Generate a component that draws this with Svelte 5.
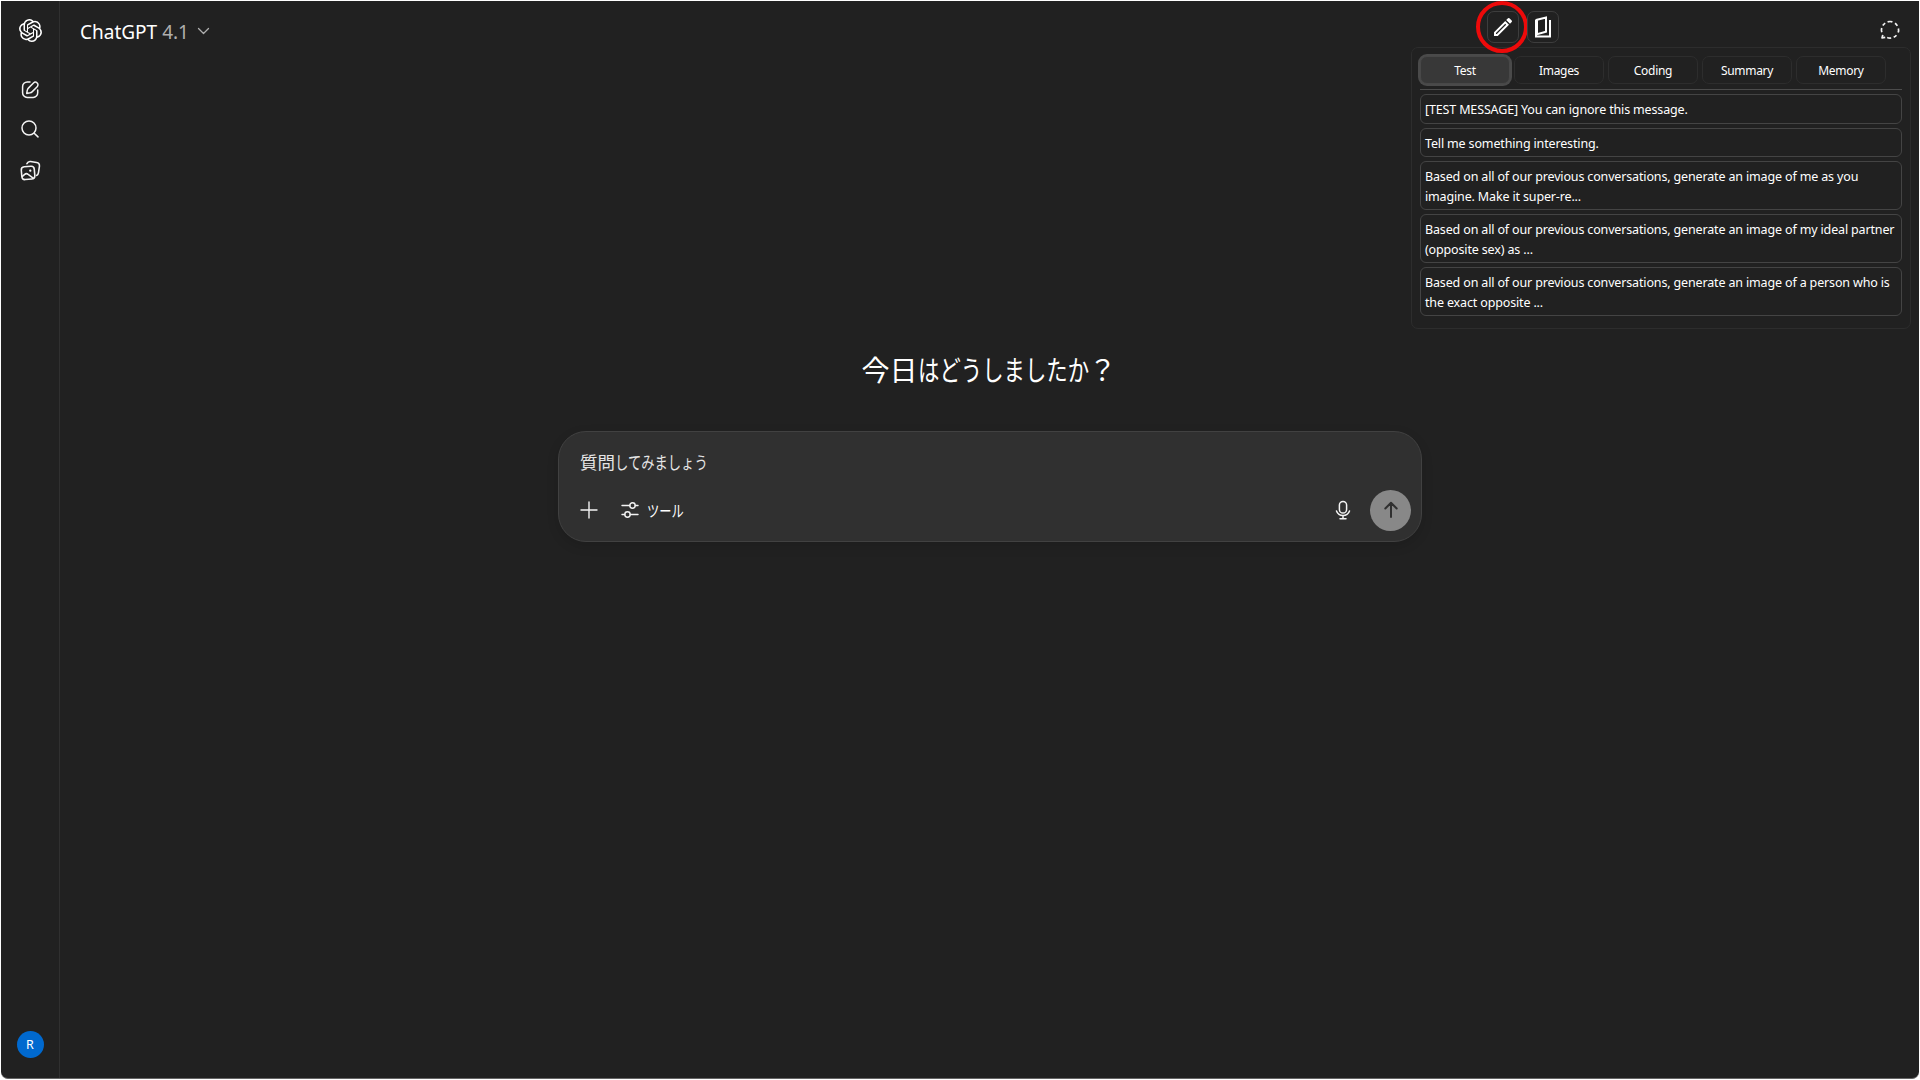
<script>
  const tabs = ['Test', 'Images', 'Coding', 'Summary', 'Memory'];
  const prompts = [
    { lines: ['[TEST MESSAGE] You can ignore this message.'], gap: 'roomy' },
    { lines: ['Tell me something interesting.'], gap: '' },
    { lines: ['Based on all of our previous conversations, generate an image of me as you', 'imagine. Make it super-re...'], gap: '' },
    { lines: ['Based on all of our previous conversations, generate an image of my ideal partner', '(opposite sex) as ...'], gap: '' },
    { lines: ['Based on all of our previous conversations, generate an image of a person who is', 'the exact opposite ...'], gap: '' },
  ];
</script>

<div class="window">
  <aside class="rail">
    <svg class="logo" viewBox="0 0 24 24" fill="#fff"><path d="M22.2819 9.8211a5.9847 5.9847 0 0 0-.5157-4.9108 6.0462 6.0462 0 0 0-6.5098-2.9A6.0651 6.0651 0 0 0 4.9807 4.1818a5.9847 5.9847 0 0 0-3.9977 2.9 6.0462 6.0462 0 0 0 .7427 7.0966 5.98 5.98 0 0 0 .511 4.9107 6.051 6.051 0 0 0 6.5146 2.9001A5.9847 5.9847 0 0 0 13.2599 24a6.0557 6.0557 0 0 0 5.7718-4.2058 5.9894 5.9894 0 0 0 3.9977-2.9001 6.0557 6.0557 0 0 0-.7475-7.0729zm-9.022 12.6081a4.4755 4.4755 0 0 1-2.8764-1.0408l.1419-.0804 4.7783-2.7582a.7948.7948 0 0 0 .3927-.6813v-6.7369l2.02 1.1686a.071.071 0 0 1 .038.052v5.5826a4.504 4.504 0 0 1-4.4945 4.4944zm-9.6607-4.1254a4.4708 4.4708 0 0 1-.5346-3.0137l.142.0852 4.783 2.7582a.7712.7712 0 0 0 .7806 0l5.8428-3.3685v2.3324a.0804.0804 0 0 1-.0332.0615L9.74 19.9502a4.4992 4.4992 0 0 1-6.1408-1.6464zM2.3408 7.8956a4.485 4.485 0 0 1 2.3655-1.9728V11.6a.7664.7664 0 0 0 .3879.6765l5.8144 3.3543-2.0201 1.1685a.0757.0757 0 0 1-.071 0l-4.8303-2.7865A4.504 4.504 0 0 1 2.3408 7.872zm16.5963 3.8558L13.1038 8.364 15.1192 7.2a.0757.0757 0 0 1 .071 0l4.8303 2.7913a4.4944 4.4944 0 0 1-.6765 8.1042v-5.6772a.79.79 0 0 0-.407-.667zm2.0107-3.0231l-.142-.0852-4.7735-2.7818a.7759.7759 0 0 0-.7854 0L9.409 9.2297V6.8974a.0662.0662 0 0 1 .0284-.0615l4.8303-2.7866a4.4992 4.4992 0 0 1 6.6802 4.66zM8.3065 12.863l-2.02-1.1638a.0804.0804 0 0 1-.038-.0567V6.0742a4.4992 4.4992 0 0 1 7.3757-3.4537l-.142.0805L8.704 5.459a.7948.7948 0 0 0-.3927.6813zm1.0976-2.3654l2.602-1.4998 2.6069 1.4998v2.9994l-2.5974 1.4997-2.6067-1.4997Z" /></svg>
    <svg class="compose" viewBox="0 0 20 20"><path d="M10 2H7.5A4.7 4.7 0 0 0 2.6 6.8v6A4.5 4.5 0 0 0 7.2 17.4h6a4.5 4.5 0 0 0 4.5-4.6V10M7.3 10.1c.3-1 .7-1.600 1.300-2.200l4.900-4.900c1-1 2.700-1 3.700 0s1 2.700 0 3.700l-4.900 4.900c-.6.6-1.200 1-2.200 1.200l-3.400.6Z" /></svg>
    <svg class="search" viewBox="0 0 20 20"><circle cx="9" cy="9" r="7" /><path d="m14.200 14.200 3.800 3.700" /></svg>
    <svg class="library" viewBox="0 0 20 20"><g transform="rotate(-5 7.500 12.500)"><rect x="1.500" y="6.200" width="12.400" height="12.200" rx="3" /><path d="m2 15.100 2.400-1.700q1.700-1.200 3.300.3l4.700 4.200" /><circle class="dot" cx="10" cy="10.300" r="1.100" /></g><path d="M6.600 3.500Q7.700 1.200 10 1.500l5.800.8Q18.900 2.800 18.500 6l-.9 6q-.3 2-1.800 2.700" /></svg>
    <div class="avatar">R</div>
  </aside>

  <main>
    <header>
      <div class="model"><span class="name">ChatGPT</span><span class="version">4.1</span><svg viewBox="0 0 12 8"><path d="m1 1.500 5 5 5-5" /></svg></div>
      <svg class="temporary" viewBox="0 0 20 20"><path d="M7.600 1.900Q10 1.100 12.400 1.900M15 3.300q1.500 1 2.300 2.600M18.400 8.500q.5 2.200-.2 4M16.500 15.200q-1.100 1.200-2.800 2M11.200 18q-2.200.3-4-.5M5.200 17.300l-3.200.6.800-3M1.800 12.300Q1.100 10.200 1.700 8M2.800 5.500q1-1.500 2.400-2.400" /></svg>
    </header>

    <section class="chat">
      <h1>今日<span class="kana">はどうしましたか</span>？</h1>
      <div class="composer">
        <div class="placeholder">質問<span class="kana">してみましょう</span></div>
        <div class="actions">
          <svg class="plus" viewBox="0 0 18 18"><path d="M9 1v16M1 9h16" /></svg>
          <svg class="sliders" viewBox="0 0 18 18"><path d="M1 4.500h7.800M14.200 4.500H17M1 13.500h2.800M9.200 13.500H17" /><circle cx="11.500" cy="4.500" r="2.700" /><circle cx="6.500" cy="13.500" r="2.700" /></svg>
          <span class="tools kana">ツール</span>
          <svg class="mic" viewBox="0 0 16 20"><rect x="4.400" y="1.500" width="7.200" height="11.500" rx="3.600" /><path d="M1.500 11c1.100 3 3.500 4.500 6.500 4.500s5.400-1.500 6.500-4.500M8 15.500v3M5 18.800h6" /></svg>
          <div class="send"><svg viewBox="0 0 16 18"><path d="M8 16V2M2.300 7.500 8 1.800l5.700 5.700" /></svg></div>
        </div>
      </div>
    </section>
  </main>

  <div class="extension">
    <div class="toggles">
      <div class="toggle marked"><svg viewBox="0 0 24 24"><path d="M3 17.250V21h3.750L18 9.750 14.250 6zM5.900 19H5v-.9L14.250 8.850l.9.900zM20.700 7a1 1 0 0 0 0-1.400l-2.300-2.300a1 1 0 0 0-1.400 0l-1.800 1.800L19 8.800z" /></svg><span class="ring"></span></div>
      <div class="toggle"><svg class="book" viewBox="0 0 18 22"><path d="M3 3.700 12 1.500v14.200L3 18.200zM2 3.500v17h14V4" /></svg></div>
    </div>
    <div class="panel">
      <div class="tabs">
        {#each tabs as tab, i}
          <div class="tab" class:active={i === 0}>{tab}</div>
        {/each}
      </div>
      <div class="prompts">
        {#each prompts as prompt}
          <div class="prompt {prompt.gap}">
            {#each prompt.lines as line}<div class="line">{line}</div>{/each}
          </div>
        {/each}
      </div>
    </div>
  </div>
</div>

<style>
  :global(body) { background: #fff; overflow: hidden; }
  * { box-sizing: border-box; }
  svg { display: block; fill: none; stroke: #f3f3f3; stroke-width: 1.5; stroke-linecap: round; stroke-linejoin: round; flex: none; }
  .window {
    position: relative; display: flex; width: 1918px; height: 1078px; margin: 1px;
    background: #212121; color: #fff; overflow: hidden; border-bottom: 1px solid #666; border-radius: 0 0 7px 7px;
    font-family: "Noto Sans", "Noto Sans CJK JP", sans-serif;
  }
  .rail { width: 59px; border-right: 1px solid #303030; display: flex; flex-direction: column; align-items: center; padding: 18px 0 20px; }
  .logo { width: 23px; height: 23px; fill: #fff; stroke: none; }
  .compose { width: 20px; height: 20px; margin-top: 38px; }
  .search { width: 20px; height: 20px; margin-top: 19px; }
  .library { width: 21px; height: 21px; margin-top: 21px; }
  .library .dot { fill: #fff; stroke: none; }
  .avatar { width: 27px; height: 27px; border-radius: 50%; background: #0069cf; margin-top: auto; display: grid; place-items: center; font-size: 12.500px; }
  main { flex: 1; display: flex; flex-direction: column; }
  header { height: 60px; display: flex; justify-content: space-between; padding: 0 19px 2px 20px; align-items: center; }
  .model { display: flex; align-items: center; font-size: 19px; line-height: 28px; padding-top: 3px; }
  .version { color: #afafaf; margin-left: 5px; letter-spacing: -.1px; }
  .model svg { width: 13px; height: 8px; margin: 0 0 2px 8px; stroke: #afafaf; stroke-width: 1.3; }
  .temporary { width: 20px; height: 20px; stroke-width: 1.7; stroke-linecap: butt; }
  .chat { width: 864px; margin: 289px 0 0 498px; }
  .kana { display: inline-block; transform: scaleX(.764); transform-origin: 0 50%; }
  h1 { margin: 0 0 0 -2px; font-size: 28px; font-family: "Noto Sans CJK JP", sans-serif; line-height: 38px; height: 38px; font-weight: 400; text-align: center; white-space: nowrap; }
  h1 .kana { width: 224px; margin-right: -53px; }
  .composer { height: 111px; margin-top: 43px; border: 1px solid #414141; border-radius: 28px; background: #303030; padding: 18px 10px 10px 21px; box-shadow: 0 4px 12px #0002; }
  .placeholder { font-size: 17.500px; line-height: 25px; height: 26px; color: #e4e4e4; white-space: nowrap; }
  .placeholder .kana { transform: scaleX(.76); }
  .actions { display: flex; align-items: center; height: 40px; margin-top: 14px; }
  .plus { width: 18px; height: 18px; stroke-width: 1.4; }
  .sliders { width: 18px; height: 18px; margin-left: 23px; stroke-width: 1.4; }
  .tools { font-size: 16px; margin-left: 8px; white-space: nowrap; }
  .mic { width: 16px; height: 20px; margin-left: auto; }
  .send { width: 41px; height: 41px; margin-left: 19px; border-radius: 50%; background: #888; display: grid; place-items: center; }
  .send svg { width: 16px; height: 18px; stroke: #303030; stroke-width: 2; }
  .extension { position: absolute; left: 1410px; top: 10px; width: 500px; }
  .toggles { display: flex; gap: 8px; padding-left: 76px; }
  .toggle { position: relative; width: 32px; height: 32px; border: 1px solid #3d3d3d; border-radius: 7px; display: grid; place-items: center; }
  .toggle svg { width: 24px; height: 24px; stroke: none; fill: #fff; }
  .toggle .book { width: 18px; height: 22px; margin-top: -1px; fill: none; stroke: #fff; stroke-width: 2; stroke-linecap: butt; stroke-linejoin: miter; }
  .ring { position: absolute; left: -12px; top: -11px; width: 52px; height: 52px; border: 4px solid #ee0a0a; border-radius: 50%; }
  .panel { height: 282px; margin-top: 4px; border: 1px solid #2d2d2d; border-radius: 7px; padding: 8px; }
  .tabs { display: flex; gap: 4px; height: 34px; border-bottom: 1px solid #4c4c4c; }
  .tab { width: 90px; height: 28px; border: 1px solid #2d2d2d; border-radius: 7px; font-size: 12px; line-height: 28px; text-align: center; letter-spacing: -.3px; }
  .tab.active { background: #383838; border-color: #484848; box-shadow: 0 0 0 2px #4a4a4a; }
  .prompts { padding-top: 4px; display: flex; flex-direction: column; gap: 4px; }
  .prompt { border: 1px solid #444; border-radius: 6px; padding: 5px 4px 2px; font-size: 12.500px; line-height: 20px; letter-spacing: -.150px; white-space: nowrap; width: 482px; }
  .prompt.roomy { padding: 5px 4px 3px; }
</style>
